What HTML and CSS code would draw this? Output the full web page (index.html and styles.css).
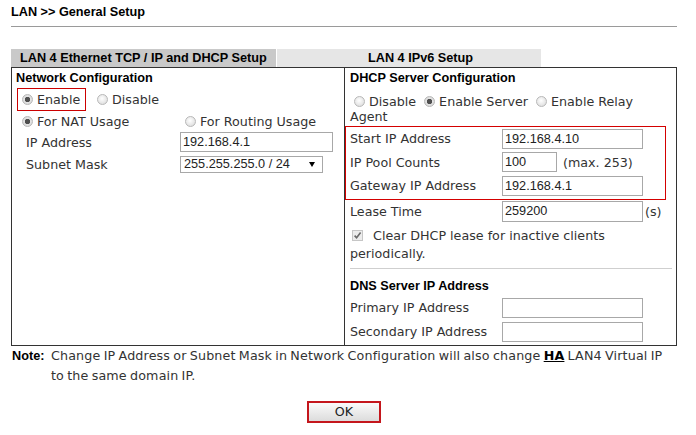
FILE: index.html
```html
<!DOCTYPE html>
<html lang="en">

<head>
    <meta charset="UTF-8">
    <title>LAN General Setup</title>
    <link rel="stylesheet" href="styles.css">
</head>

<body>
    <div class="page">
        <h1 class="title">LAN &gt;&gt; General Setup</h1>

        <div class="tabs">
            <div class="tab tab_ativa">LAN 4 Ethernet TCP / IP and DHCP Setup</div>
            <div class="tab tab_outra">LAN 4 IPv6 Setup</div>
        </div>

        <div class="painel">
            <!-- coluna da esquerda -->
            <div class="coluna esquerda">
                <div class="secao">Network Configuration</div>
                <div class="linha_enable">
                    <span class="destaque"><span class="radio on"></span>Enable</span>
                    <span class="radio radio_disable"></span>Disable
                </div>
                <div class="linha_uso">
                    <span><span class="radio on"></span>For NAT Usage</span>
                    <span><span class="radio"></span>For Routing Usage</span>
                </div>
                <div class="campo">
                    <span>IP Address</span>
                    <span class="caixa largo">192.168.4.1</span>
                </div>
                <div class="campo">
                    <span>Subnet Mask</span>
                    <span class="select">255.255.255.0 / 24<span class="seta"></span></span>
                </div>
            </div>

            <!-- coluna da direita -->
            <div class="coluna direita">
                <div class="secao">DHCP Server Configuration</div>
                <p class="opcoes_dhcp"><span class="radio"></span>Disable <span class="radio on"></span>Enable Server <span class="radio"></span>Enable Relay Agent</p>
                <div class="destaque_dhcp">
                    <div class="campo_dhcp">
                        <span>Start IP Address</span>
                        <span class="caixa">192.168.4.10</span>
                    </div>
                    <div class="campo_dhcp">
                        <span>IP Pool Counts</span>
                        <span class="valor"><span class="caixa curto">100</span>(max. 253)</span>
                    </div>
                    <div class="campo_dhcp">
                        <span>Gateway IP Address</span>
                        <span class="caixa">192.168.4.1</span>
                    </div>
                </div>
                <div class="campo_dhcp lease">
                    <span>Lease Time</span>
                    <span class="valor"><span class="caixa">259200</span>(s)</span>
                </div>
                <p class="limpar">
                    <svg class="check" width="11" height="11" viewBox="0 0 11 11">
                        <rect x="0.5" y="0.5" width="10" height="10" fill="#ececec" stroke="#c6c6c6" />
                        <path d="M2.6 5.6 L4.6 7.8 L8.6 2.6" stroke="#6a6a6a" stroke-width="1.6" fill="none" />
                    </svg>
                    Clear DHCP lease for inactive clients periodically.
                </p>
                <hr class="separador">
                <div class="secao dns">DNS Server IP Address</div>
                <div class="campo_dhcp dns_linha">
                    <span>Primary IP Address</span>
                    <span class="caixa"></span>
                </div>
                <div class="campo_dhcp dns_linha">
                    <span>Secondary IP Address</span>
                    <span class="caixa"></span>
                </div>
            </div>
        </div>

        <div class="nota">
            <strong>Note:</strong>
            <p>Change IP Address or Subnet Mask in Network Configuration will also change <b class="ha">HA</b> LAN4 Virtual IP to the same domain IP.</p>
        </div>

        <div class="acoes">
            <button class="botao_ok">OK</button>
        </div>
    </div>
</body>

</html>
```

FILE: styles.css
```css
* {
    margin: 0;
    padding: 0;
    box-sizing: border-box;
}

body {
    background: #fff;
    font-family: "DejaVu Sans", Verdana, sans-serif;
    font-size: 12.7px;
    color: #333;
}

.page {
    width: 677px;
    padding-left: 11px;
}

.title {
    font: bold 12.7px "Liberation Sans", Arial, sans-serif;
    color: #000;
    line-height: 16px;
    padding: 4px 0 6px;
    border-bottom: 1px solid #9a9a9a;
}

/* abas */
.tabs {
    display: flex;
    margin-top: 22px;
    height: 18px;
}

.tab {
    font: bold 12.7px "Liberation Sans", Arial, sans-serif;
    color: #000;
    line-height: 18px;
}

.tab_ativa {
    width: 265px;
    background: #c9c9c9;
    padding-left: 9px;
}

.tab_outra {
    width: 264px;
    margin-left: 1px;
    background: #e6e6e6;
    padding-left: 91px;
}

/* painel principal */
.painel {
    display: grid;
    grid-template-columns: 333px 1fr;
    border: 1px solid #333;
}

.esquerda {
    border-right: 1px solid #333;
}

.direita {
    padding: 0 5px 1px;
}

.secao {
    font: bold 12.7px "Liberation Sans", Arial, sans-serif;
    color: #000;
    height: 20px;
    line-height: 20px;
}

.esquerda .secao {
    padding-left: 4px;
}

.radio {
    display: inline-block;
    width: 11px;
    height: 11px;
    border-radius: 50%;
    border: 1px solid #b8b8b8;
    background: radial-gradient(circle at 45% 40%, #fff, #d6d6d6);
    vertical-align: -1px;
    margin: 0 4px;
}

.radio.on {
    background: radial-gradient(circle, #4f4f4f 0 2.4px, #e4e4e4 3px, #cfcfcf);
}

.linha_enable {
    height: 23px;
    display: flex;
    align-items: center;
}

.destaque {
    display: flex;
    align-items: center;
    width: 69px;
    height: 23px;
    margin-left: 5px;
    border: 1px solid #cc0000;
}

.destaque .radio {
    margin-left: 4px;
}

.radio_disable {
    margin-left: 11px;
}

.linha_uso {
    display: grid;
    grid-template-columns: 163px 1fr;
    height: 20px;
    align-items: center;
    padding-left: 6px;
}

.campo {
    display: grid;
    grid-template-columns: 154px 1fr;
    align-items: center;
    height: 22px;
    padding-left: 14px;
}

.caixa {
    display: inline-block;
    width: 141px;
    height: 20px;
    border: 1px solid #a8a8a8;
    background: #fff;
    font: 12.7px "Liberation Sans", Arial, sans-serif;
    color: #222;
    line-height: 18px;
    padding-left: 2px;
}

.caixa.largo {
    width: 153px;
}

.caixa.curto {
    width: 55px;
    margin-right: 6px;
}

.select {
    display: flex;
    justify-content: space-between;
    align-items: center;
    width: 143px;
    height: 17px;
    border: 1px solid #a8a8a8;
    font: 12.7px "Liberation Sans", Arial, sans-serif;
    color: #222;
    padding: 0 7px 0 3px;
}

.seta {
    border-left: 3px solid transparent;
    border-right: 3px solid transparent;
    border-top: 5px solid #000;
}

/* coluna dhcp */
.opcoes_dhcp {
    padding-top: 6px;
    line-height: 15px;
}

.opcoes_dhcp .radio:first-child {
    margin-left: 4px;
}

.destaque_dhcp {
    margin: 2px 0 0 -5px;
    width: 321px;
    border: 1px solid #d40000;
    padding: 0 0 1px 4px;
}

.campo_dhcp {
    display: grid;
    grid-template-columns: 152px 1fr;
    align-items: center;
    height: 23px;
}

.destaque_dhcp .campo_dhcp {
    height: 23.5px;
}

.valor {
    display: flex;
    align-items: center;
}

.lease {
    height: 24px;
}

.lease .caixa {
    margin-right: 2px;
    height: 21px;
}

.limpar {
    padding-top: 3px;
    line-height: 18px;
}

.check {
    vertical-align: -1px;
    margin: 0 6px 0 2px;
}

.separador {
    border: 0;
    border-top: 1px solid #cfcfcf;
    margin-top: 5px;
    width: 322px;
}

.dns {
    margin-top: 7px;
}

.dns_linha {
    height: 24px;
}

/* nota */
.nota {
    display: grid;
    grid-template-columns: 39px 1fr;
    width: 662px;
    line-height: 20px;
    padding-left: 1px;
    font-size: 12.7px;
}

.nota p {
    letter-spacing: 0.15px;
    word-spacing: -1px;
}

.nota strong {
    color: #000;
    font: bold 12.7px "Liberation Sans", Arial, sans-serif;
    line-height: 20px;
}

.ha {
    color: #000;
    text-decoration: underline;
}

.acoes {
    display: flex;
    justify-content: center;
    margin-top: 15px;
}

.botao_ok {
    width: 74px;
    height: 22px;
    border: 2px solid #c4161c;
    background: linear-gradient(#fafafa, #dcdcdc);
    font-family: "DejaVu Sans", sans-serif;
    font-size: 12.7px;
    color: #222;
}
```
